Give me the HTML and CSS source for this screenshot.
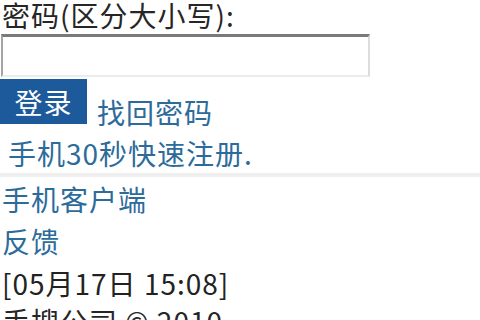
FILE: index.html
```html
<html>

<head lang="zh">
    <meta charset="utf-8">
    <title>登录</title>
    <link rel="stylesheet" href="styles.css">
</head>

<body>
    <form class="login">
        <label class="pwd-label" for="pwd">密码(区分大小写):</label>
        <input class="pwd-input" type="password" id="pwd" name="pwd">
        <div class="actions">
            <button class="btn" type="submit">登录</button>
            <a class="link" href="#">找回密码</a>
        </div>
        <div class="register">
            <a class="link" href="#">手机30秒快速注册.</a>
        </div>
    </form>
    <div class="footer">
        <div class="row"><a class="link" href="#">手机客户端</a></div>
        <div class="row"><a class="link" href="#">反馈</a></div>
        <div class="row time">[05月17日 15:08]</div>
        <div class="row copy">手搜公司 © 2010</div>
    </div>
</body>

</html>
```

FILE: styles.css
```css
body {
    margin: 0;
    font-family: "Noto Sans CJK SC", sans-serif;
    font-size: 28px;
    letter-spacing: 1px;
    color: #262626;
    background: #fff;
}

.login {
    margin: 0;
    padding: 0;
}

.pwd-label {
    display: block;
    padding-left: 2px;
    height: 34px;
    line-height: 30px;
}

.pwd-input {
    display: block;
    width: 369px;
    height: 43px;
    margin: 0 0 2px 1px;
    border-top: 3px solid #7a7a7a;
    border-left: 2px solid #a5a5a5;
    border-right: 2px solid #dcdcdc;
    border-bottom: 2px solid #ececec;
    background: #fff;
    box-sizing: border-box;
}

.actions {
    display: flex;
    align-items: flex-end;
    height: 48px;
}

.btn {
    width: 87px;
    height: 45px;
    background-color: #1c5a9c;
    color: #fff;
    border: none;
    font-family: "Noto Sans CJK SC", sans-serif;
    font-size: 28px;
    letter-spacing: 1px;
    line-height: 40px;
    padding: 0;
    margin: 0 10px 3px 0;
}

.link {
    color: #2c6b9a;
    text-decoration: none;
}

.actions .link {
    line-height: 30px;
}

.register {
    padding: 10px 0 4px 8px;
    line-height: 32px;
    border-bottom: 4px solid #efefef;
}

.footer {
    padding: 6px 0 0 2px;
}

.row {
    height: 42px;
    line-height: 32px;
}

.time {
    color: #222;
    height: 38px;
}
```
